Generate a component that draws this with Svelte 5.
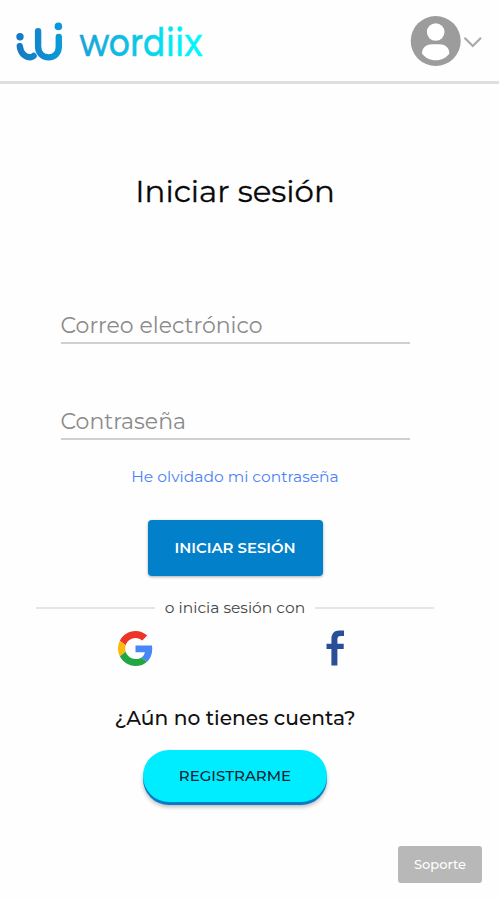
<script>
  let email = $state('');
  let password = $state('');
</script>

<div class="page">
  <header>
    <svg class="logo" width="200" height="64" viewBox="10 4 200 64" role="img" aria-label="wordiix">
      <defs>
        <linearGradient id="mark" gradientUnits="userSpaceOnUse" x1="17" y1="0" x2="62" y2="0">
          <stop offset="0" stop-color="#1679c3" />
          <stop offset="1" stop-color="#099bd8" />
        </linearGradient>
        <linearGradient id="word" gradientUnits="userSpaceOnUse" x1="80" y1="0" x2="202" y2="0">
          <stop offset="0" stop-color="#16a4da" />
          <stop offset="0.45" stop-color="#0fc4e4" />
          <stop offset="0.8" stop-color="#02eef7" />
          <stop offset="1" stop-color="#00f8ff" />
        </linearGradient>
      </defs>
      <circle cx="20" cy="36.7" r="3.7" fill="url(#mark)" />
      <circle cx="58.4" cy="26.4" r="3.8" fill="url(#mark)" />
      <g fill="none" stroke="url(#mark)" stroke-width="6.4" stroke-linecap="round">
        <path d="M19.8 46.3C20.5 53.5 25.5 57.3 30.2 57.3Q32.3 57.2 33.6 56" />
        <path d="M38.1 31.3V46.5C38.1 53 42.5 57.4 48.6 57.4S58.8 53 58.8 46.5V37" />
      </g>
      <text x="79.5" y="56" textLength="123" lengthAdjust="spacingAndGlyphs" fill="url(#word)" stroke="url(#word)">wordiix</text>
    </svg>
    <button class="account" aria-label="Cuenta">
      <svg width="74" height="52" viewBox="410 15 74 52">
        <circle cx="435.7" cy="41" r="25" fill="#9c9c9c" />
        <circle cx="435.7" cy="32" r="8.8" fill="#fff" />
        <path d="M422 53.5C422 47 427 44.2 432 44.2H439.5C444.5 44.2 449.3 47 449.3 53.5C446.5 57.7 441.5 60.3 435.7 60.3S425 57.7 422 53.5Z" fill="#fff" />
        <path d="M464.5 37.8L472.8 46L481 37.8" fill="none" stroke="#a9a9ad" stroke-width="2.2" />
      </svg>
    </button>
  </header>

  <main>
    <h1>Iniciar sesión</h1>
    <form onsubmit={(e) => e.preventDefault()}>
      <input class="mail" type="text" placeholder="Correo electrónico" aria-label="Correo electrónico" bind:value={email} />
      <input class="pass" type="password" placeholder="Contraseña" aria-label="Contraseña" bind:value={password} />
      <a class="forgot" href="#recuperar">He olvidado mi contraseña</a>
      <button class="login" type="submit">INICIAR SESIÓN</button>
    </form>
    <div class="divider"><span>o inicia sesión con</span></div>
    <div class="social">
      <button aria-label="Google">
        <svg width="35" height="35" viewBox="0 0 48 48">
          <path fill="#ea3527" d="M24 9.5c3.54 0 6.71 1.22 9.21 3.6l6.85-6.85C35.9 2.38 30.47 0 24 0 14.62 0 6.51 5.38 2.56 13.22l7.98 6.19C12.43 13.72 17.74 9.5 24 9.5z" />
          <path fill="#4788f4" d="M46.98 24.55c0-1.57-.15-3.09-.38-4.55H24v9.02h12.94c-.58 2.96-2.26 5.48-4.78 7.18l7.73 6c4.51-4.18 7.09-10.36 7.09-17.65z" />
          <path fill="#fbb90a" d="M10.53 28.59c-.48-1.45-.76-2.99-.76-4.59s.27-3.14.76-4.59l-7.98-6.19C.92 16.46 0 20.12 0 24s.92 7.54 2.56 10.78l7.97-6.19z" />
          <path fill="#1ea744" d="M24 48c6.48 0 11.93-2.13 15.89-5.81l-7.73-6c-2.15 1.45-4.92 2.3-8.16 2.3-6.26 0-11.57-4.22-13.47-9.91l-7.98 6.19C6.51 42.62 14.62 48 24 48z" />
        </svg>
      </button>
      <button aria-label="Facebook">
        <svg width="19" height="36" viewBox="0 0 19 36">
          <path fill="#294f98" d="M5.4 35.5V19H.5V13.7H5.4V9.2C5.4 3.7 8.3.6 13.1.6H18V5.9H14.7C12.3 5.9 11.4 7.1 11.4 9.2V13.7H17.7V19H11.4V35.5Z" />
        </svg>
      </button>
    </div>
    <p>¿Aún no tienes cuenta?</p>
    <button class="register">REGISTRARME</button>
  </main>
  <button class="support">Soporte</button>
</div>

<style>
  :global(body) { margin: 0; background: #fefefe; }
  .page {
    position: relative;
    box-sizing: border-box;
    width: 499px;
    height: 900px;
    overflow: hidden;
    background: #fefefe;
    color: #161616;
    font-family: Montserrat, Inter, sans-serif;
  }
  button { padding: 0; border: 0; background: none; font-family: inherit; cursor: pointer; }
  svg { display: block; }
  header {
    display: flex;
    justify-content: space-between;
    align-items: flex-start;
    box-sizing: border-box;
    height: 84px;
    padding: 4px 15px 0 10px;
    border-bottom: 3px solid #dfdfdf;
  }
  .logo { overflow: visible; }
  .logo text { font: 500 39px Montserrat, Inter, sans-serif; stroke-width: 0.5px; stroke-linejoin: round; }
  .account { margin-top: 11px; }
  main {
    display: flex;
    flex-direction: column;
    align-items: center;
    width: 470px;
  }
  h1 {
    margin: 87px 0 0;
    color: #080808;
    font-size: 30.8px;
    font-weight: 400;
    line-height: 40px;
    white-space: nowrap;
    -webkit-text-stroke: 0.3px #080808;
  }
  form { display: flex; flex-direction: column; align-items: center; }
  input {
    box-sizing: border-box;
    width: 349px;
    height: 36px;
    padding: 1px 0 0;
    border: 0;
    border-bottom: 2px solid #cfcfcf;
    border-radius: 0;
    outline: none;
    background: transparent;
    color: #333;
    font-family: inherit;
    font-size: 22px;
    font-weight: 400;
  }
  input::placeholder { color: #8a8a8a; opacity: 1; }
  .mail { margin-top: 97px; }
  .pass { margin-top: 60px; }
  .forgot {
    margin-top: 27px;
    color: #4c82f5;
    font-size: 15.5px;
    line-height: 20px;
    text-decoration: none;
    white-space: nowrap;
  }
  .login {
    width: 175px;
    height: 56px;
    margin-top: 33px;
    border-radius: 4px;
    background: #0380ca;
    box-shadow: 0 1px 3px #0005;
    color: #fff;
    font-size: 14.9px;
    font-weight: 600;
  }
  .divider {
    display: flex;
    align-items: center;
    justify-content: space-between;
    width: 399px;
    height: 20px;
    margin-top: 22px;
    color: #444;
    font-size: 15.5px;
    line-height: 18px;
    white-space: nowrap;
  }
  .divider::before, .divider::after { content: ''; width: 119px; height: 2px; background: #e5e5e5; }
  .social {
    display: flex;
    justify-content: space-between;
    width: 227px;
    height: 36px;
    margin: 12px 7px 0 0;
  }
  p {
    margin: 39px 0 0;
    color: #111;
    font-size: 20.2px;
    font-weight: 500;
    line-height: 26px;
    white-space: nowrap;
  }
  .register {
    width: 184px;
    height: 52px;
    padding-bottom: 1px;
    margin-top: 19px;
    border-radius: 26px;
    background: #00edff;
    box-shadow: 0 3px 0 #087bc5, 0 5px 4px #0004;
    color: #123;
    font-size: 15px;
    font-weight: 500;
  }
  .support {
    position: absolute;
    right: 17px;
    bottom: 17px;
    width: 84px;
    height: 37px;
    padding-bottom: 2px;
    border-radius: 3px;
    background: #b8b8b8;
    color: #fff;
    font-size: 13px;
    font-weight: 500;
  }
</style>
